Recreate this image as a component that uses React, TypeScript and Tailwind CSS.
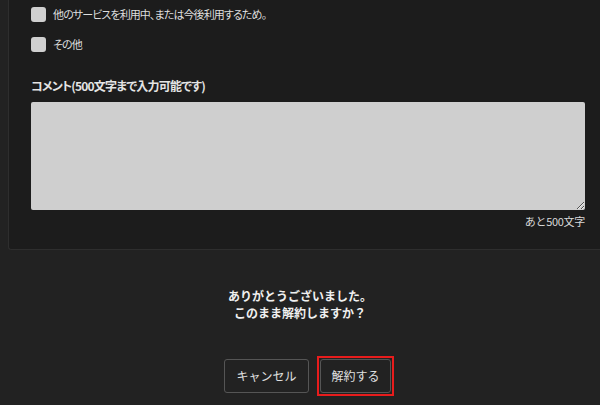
const jp = { fontFamily: '"Noto Sans CJK JP", "Noto Sans", sans-serif' };

const reasons = ["他のサービスを利用中、または今後利用するため。", "その他"];

function CheckRow({ label }: { label: string }) {
  return (
    <label className="flex h-[30px] items-center gap-[7px]">
      <span className="block h-[15px] w-[15px] rounded-[3px] bg-[#d0d0d0]" />
      <span className="text-[11px] tracking-[-0.9px] text-[#dedede] [font-feature-settings:'palt']">
        {label}
      </span>
    </label>
  );
}

export default function App() {
  return (
    <div className="h-[405px] w-[600px] overflow-hidden bg-[#222222]" style={jp}>
      <div className="ml-2 rounded-bl-[3px] border-b border-l border-[#2e2e2e] bg-[#1c1c1c] pb-[20px] pl-[22px] pr-[15px]">
        <div className="-mt-px flex flex-col">
          {reasons.map((r) => (
            <CheckRow key={r} label={r} />
          ))}
        </div>
        <div className="mt-[18px] text-[12px] font-bold leading-[18px] tracking-[-0.8px] text-[#e4e4e4] [font-feature-settings:'palt']">
          コメント(500文字まで入力可能です)
        </div>
        <textarea className="mt-[7px] block h-[108px] w-full resize-y rounded-[2px] bg-[#cfcfcf] outline-none" />
        <div className="mt-[3px] text-right text-[11px] leading-[16px] tracking-[-0.3px] text-[#d8d8d8]">
          あと500文字
        </div>
      </div>

      <div className="mt-[37px] text-center text-[12px] font-bold leading-[17px] text-[#f0f0f0]">
        <p>ありがとうございました。</p>
        <p>このまま解約しますか？</p>
      </div>

      <div className="mt-[35px] flex items-center justify-center gap-[8px] pl-[18px]">
        <button className="h-[34px] w-[85px] rounded-[3px] border border-[#555555] bg-[#222222] text-[12px] text-[#e0e0e0]">
          キャンセル
        </button>
        <div className="border-2 border-[#e81c1c] p-px">
          <button className="block h-[34px] w-[71px] rounded-[3px] border border-[#555555] bg-[#222222] text-[12px] text-[#e0e0e0]">
            解約する
          </button>
        </div>
      </div>
    </div>
  );
}
